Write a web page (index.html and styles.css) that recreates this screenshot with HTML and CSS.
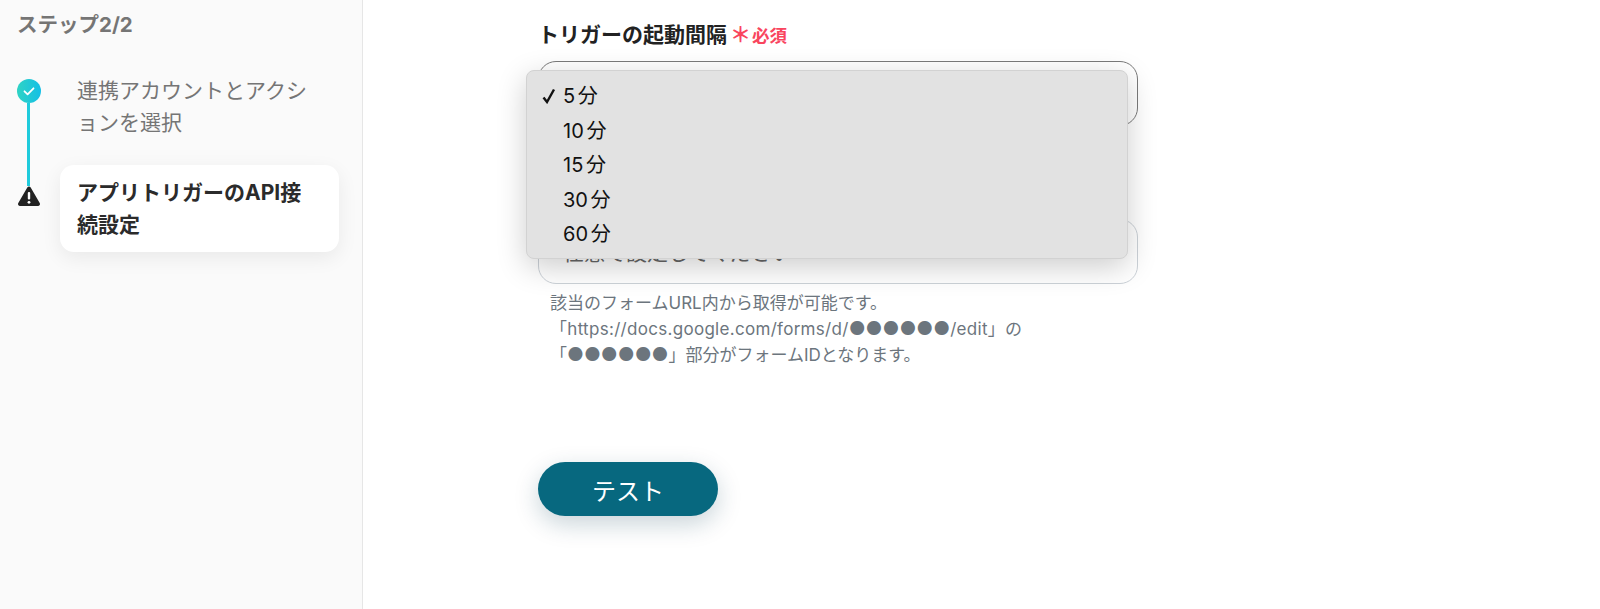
FILE: index.html
```html
<!DOCTYPE html>
<html lang="ja">
<head>
    <meta charset="UTF-8">
    <title>アプリトリガーのAPI接続設定</title>
    <link rel="stylesheet" href="styles.css">
</head>
<body>
    <div class="page">
        <aside class="sidebar">
            <div class="step-count">ステップ2/2</div>
            <div class="steps">
                <div class="step step-done">
                    <div class="marker">
                        <svg class="icon-check" width="24" height="24" viewBox="0 0 24 24">
                            <defs>
                                <linearGradient id="checkGrad" x1="0" y1="0" x2="1" y2="0">
                                    <stop offset="0" stop-color="#2fd3c4"/>
                                    <stop offset="1" stop-color="#14bfe6"/>
                                </linearGradient>
                            </defs>
                            <circle cx="12" cy="12" r="12" fill="url(#checkGrad)"/>
                            <path d="M7.5 12.3l3.1 3 5.9-6" fill="none" stroke="#fff" stroke-width="1.8" stroke-linecap="round" stroke-linejoin="round"/>
                        </svg>
                        <div class="line"></div>
                    </div>
                    <div class="step-label">連携アカウントとアクションを選択</div>
                </div>
                <div class="step step-current">
                    <div class="marker">
                        <svg class="icon-warn" width="24" height="22" viewBox="0 0 24 22">
                            <path d="M12 1.5a2 2 0 0 1 1.7 1l9 15.6a2 2 0 0 1-1.7 3H3a2 2 0 0 1-1.7-3l9-15.6a2 2 0 0 1 1.700-1z" fill="#222"/>
                            <rect x="10.800" y="7" width="2.400" height="7.500" rx="1" fill="#fff"/>
                            <circle cx="12" cy="17.300" r="1.400" fill="#fff"/>
                        </svg>
                    </div>
                    <div class="step-card">アプリトリガーのAPI接続設定</div>
                </div>
            </div>
        </aside>

        <main class="content">
            <div class="form">
                <div class="field-label">
                    <span>トリガーの起動間隔</span>
                    <span class="required"><span class="asterisk">＊</span>必須</span>
                </div>
                <div class="select-box">5分</div>
                <div class="field-label field-label-second">フォームID</div>
                <div class="text-box">任意で設定してください</div>
                <p class="help">該当のフォームURL内から取得が可能です。<br><span class="help-url">「https://docs.google.com/forms/d/<span class="dots">●●●●●●</span>/edit」の</span><br>「<span class="dots">●●●●●●</span>」部分がフォームIDとなります。</p>
                <button class="test-btn">テスト</button>

                <ul class="dropdown">
                    <li class="selected">
                        <svg class="tick" width="14" height="16" viewBox="0 0 14 16">
                            <path d="M1.500 9.500l3.500 4.500L12 1.500" fill="none" stroke="#111" stroke-width="2.400"/>
                        </svg>
                        5 分
                    </li>
                    <li>10 分</li>
                    <li>15 分</li>
                    <li>30 分</li>
                    <li>60 分</li>
                </ul>
            </div>
        </main>
    </div>
</body>
</html>
```

FILE: styles.css
```css
* {
    box-sizing: border-box;
}

html, body {
    margin: 0;
    height: 100%;
    overflow: hidden;
    background: #fff;
    font-family: "Inter", "Noto Sans CJK JP", sans-serif;
}

.page {
    display: flex;
    height: 609px;
}

/* sidebar */
.sidebar {
    width: 363px;
    flex: none;
    background: #fafafa;
    border-right: 1px solid #e6e6e6;
    padding: 10px 23px 0 17px;
}

.step-count {
    font-size: 20.500px;
    font-weight: 700;
    line-height: 30px;
    color: #757575;
}

.steps {
    margin-top: 38px;
}

.step {
    display: flex;
    align-items: flex-start;
}

.marker {
    width: 23px;
    flex: none;
    display: flex;
    flex-direction: column;
    align-items: center;
}

.marker svg {
    display: block;
    flex: none;
}

.line {
    width: 3px;
    height: 83px;
    background: #1fcbdc;
}

.step-done {
    height: 87px;
    padding-top: 1px;
}

.step-label {
    margin: -4px 0 0 37px;
    width: 236px;
    font-size: 21px;
    line-height: 32px;
    color: #757575;
}

.step-current .marker {
    margin-top: 20px;
}

.step-card {
    margin-left: 20px;
    width: 279px;
    height: 87px;
    padding: 12px 17px;
    background: #fff;
    border-radius: 14px;
    box-shadow: 0 6px 20px rgba(0, 0, 0, 0.07);
    font-size: 21px;
    font-weight: 700;
    line-height: 32px;
    color: #2b2b2b;
}

/* form */
.content {
    flex: 1;
    padding: 17px 0 0 175px;
}

.form {
    position: relative;
    width: 600px;
}

.field-label {
    display: flex;
    align-items: center;
    gap: 3px;
    height: 32px;
    font-size: 21px;
    font-weight: 700;
    color: #222;
}

.required {
    font-size: 17.500px;
    color: #f9455e;
}

.asterisk {
    font-size: 21px;
    margin-right: 1px;
}

.select-box {
    margin-top: 12px;
    height: 65px;
    padding: 0 24px;
    line-height: 63px;
    font-size: 21px;
    color: #222;
    background: #fff;
    border: 1px solid #7a7a7a;
    border-radius: 18px;
}

.field-label-second {
    margin-top: 50px;
}

.text-box {
    margin-top: 11px;
    height: 65px;
    padding: 0 24px;
    line-height: 66px;
    font-size: 21px;
    color: #666;
    background: #fff;
    border: 1px solid #ccd2d8;
    border-radius: 18px;
}

.help {
    margin: 7px 0 0 12px;
    font-size: 17px;
    line-height: 25px;
    color: #6c757d;
    white-space: nowrap;
}

.help-url {
    letter-spacing: 0.300px;
}

.dots {
    font-size: 18.500px;
    letter-spacing: 0;
}

.test-btn {
    display: block;
    margin-top: 94px;
    width: 180px;
    height: 54px;
    border: 0;
    border-radius: 27px;
    background: #07687f;
    color: #fff;
    font-family: inherit;
    font-size: 24px;
    box-shadow: 0 8px 24px rgba(7, 60, 80, 0.22);
}

/* open select menu, lies over the fields */
.dropdown {
    position: absolute;
    left: -12px;
    top: 53px;
    width: 602px;
    height: 189px;
    margin: 0;
    padding: 8px 0 0 36px;
    list-style: none;
    background: #e2e2e2;
    border: 1px solid #d2d2d2;
    border-radius: 8px;
    box-shadow: 0 8px 30px rgba(0, 0, 0, 0.2);
    font-size: 20px;
    line-height: 34.600px;
    word-spacing: -3px;
    color: #111;
}

.dropdown .selected {
    position: relative;
}

.tick {
    position: absolute;
    left: -21px;
    top: 9px;
}
```
